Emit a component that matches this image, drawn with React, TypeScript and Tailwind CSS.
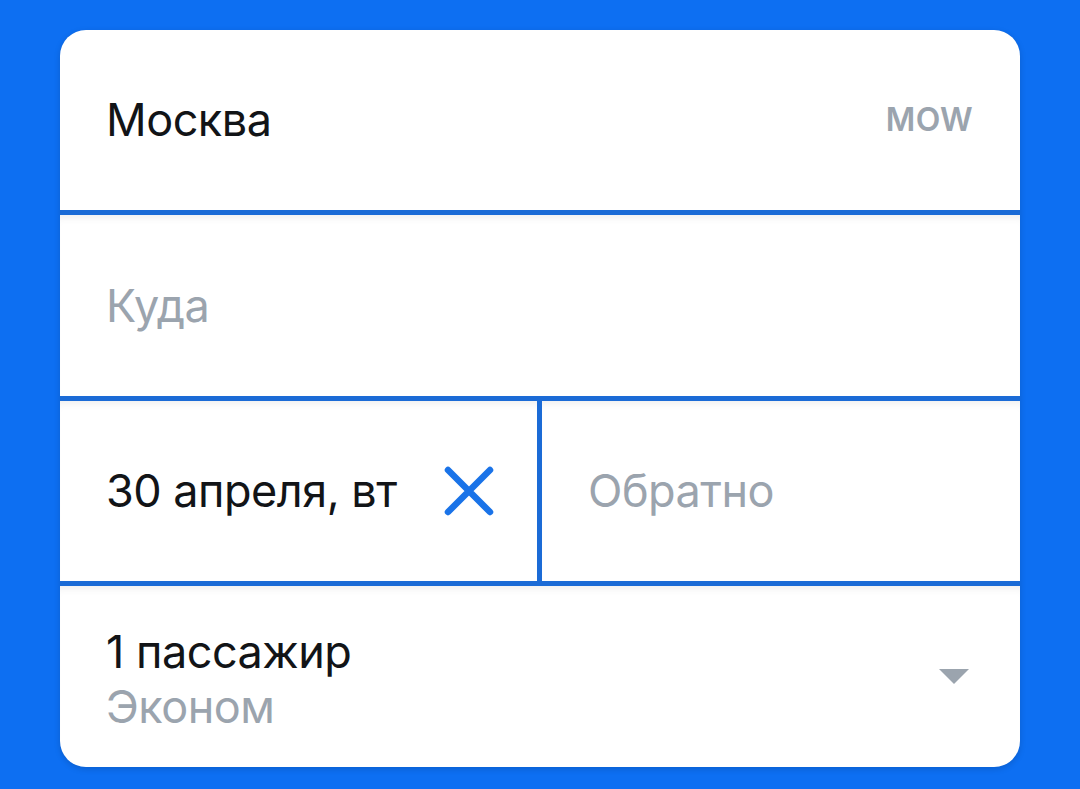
import React from "react";

const font = { fontFamily: "Inter, 'Noto Sans', sans-serif" };

export default function App() {
  return (
    <div
      className="w-[1080px] h-[789px] bg-[#0d6ff2] pt-[30px] px-[60px]"
      style={font}
    >
      <div className="w-[960px] rounded-[26px] overflow-hidden bg-[#1b6bd6] flex flex-col gap-[5px] shadow-[0_2px_6px_rgba(0,0,0,0.15)]">
        <div className="h-[180px] bg-white flex items-center justify-between pl-[46px] pr-[47px]">
          <span className="text-[45px] text-[#121417] tracking-[-0.5px]">Москва</span>
          <span className="text-[32px] font-semibold text-[#9ba4ae] tracking-[0.3px]">MOW</span>
        </div>
        <div className="h-[181px] bg-white flex items-center pl-[46px] shadow-[inset_0_8px_8px_-6px_rgba(0,0,0,0.08)]">
          <span className="text-[45px] text-[#9ba4ae] tracking-[-0.5px]">Куда</span>
        </div>
        <div className="h-[180px] flex gap-[5px]">
          <div className="w-[477px] bg-white flex items-center justify-between pl-[46px] pr-[43px] shadow-[inset_0_8px_8px_-6px_rgba(0,0,0,0.08)]">
            <span className="text-[45px] text-[#121417] tracking-[-0.5px]">30 апреля, вт</span>
            <svg width="50" height="50" viewBox="0 0 50 50">
              <path
                d="M4 4 L46 46 M46 4 L4 46"
                stroke="#1a73e8"
                strokeWidth="6.5"
                strokeLinecap="round"
                fill="none"
              />
            </svg>
          </div>
          <div className="flex-1 bg-white flex items-center pl-[46px] shadow-[inset_0_8px_8px_-6px_rgba(0,0,0,0.08)]">
            <span className="text-[45px] text-[#9ba4ae] tracking-[-0.5px]">Обратно</span>
          </div>
        </div>
        <div className="h-[181px] bg-white flex items-center justify-between pl-[46px] pr-[51px] shadow-[inset_0_8px_8px_-6px_rgba(0,0,0,0.08)]">
          <div className="flex flex-col pt-[4px]">
            <span className="text-[45px] leading-[55px] text-[#121417] tracking-[-0.5px]">1 пассажир</span>
            <span className="text-[45px] leading-[55px] text-[#9ba4ae] tracking-[-0.5px]">Эконом</span>
          </div>
          <svg width="30" height="15" viewBox="0 0 30 15">
            <path d="M0 0 L30 0 L15 15 Z" fill="#9ba4ae" />
          </svg>
        </div>
      </div>
    </div>
  );
}
